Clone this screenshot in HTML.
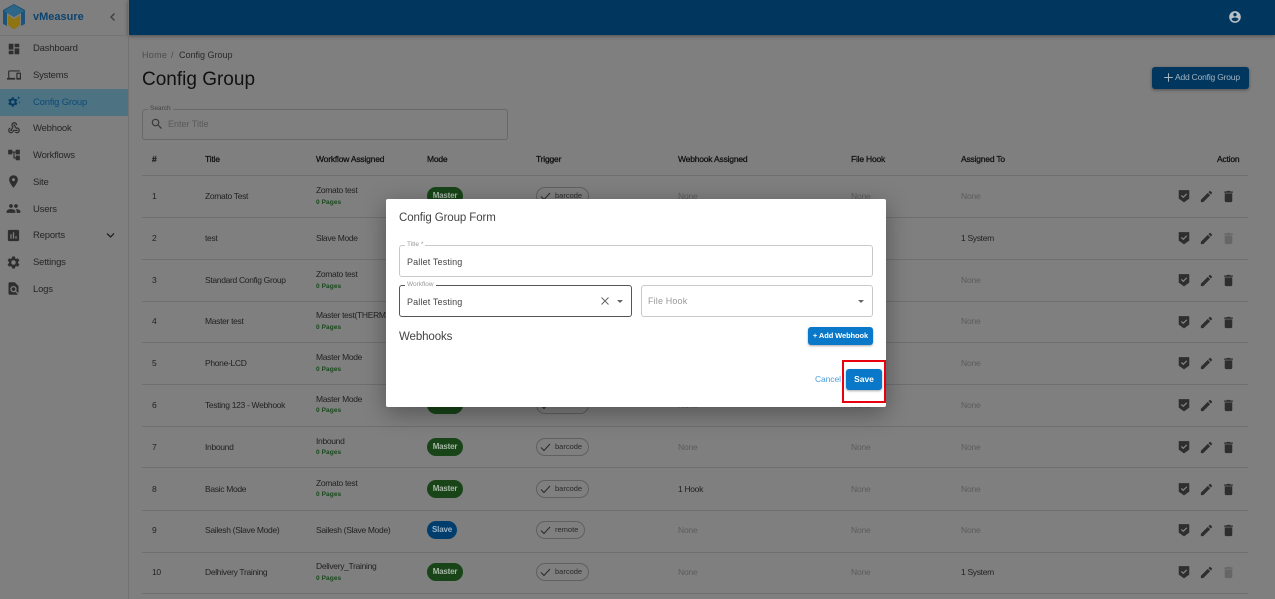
<!DOCTYPE html>
<html><head><meta charset="utf-8">
<style>
html,body{margin:0;padding:0;width:1275px;height:599px;overflow:hidden;background:#7f7f7f;font-family:"Liberation Sans",sans-serif;color:#1c1c1c}
body{filter:blur(.35px)}
*{box-sizing:border-box}
.a{position:absolute;white-space:nowrap;line-height:12px}
svg{position:absolute;display:block}
.s{font-size:9.5px;color:#262626;left:33px;letter-spacing:-.2px}
.th{font-size:8.5px;color:#101010;top:153px;letter-spacing:-.2px;-webkit-text-stroke:.25px #101010}
.t{font-size:8.5px;color:#222;letter-spacing:-.32px}
.sub{font-size:6.5px;color:#184a1c;left:316px;font-weight:bold;letter-spacing:.1px}
.n{font-size:8.5px;color:#5c5c5c;letter-spacing:-.2px}
.l{position:absolute;left:142px;width:1106px;height:1px;background:#6f6f6f}
.chip{position:absolute;height:18px;border-radius:9px;color:#a8b8a8;font-size:8px;font-weight:bold;text-align:center;line-height:18px;letter-spacing:-.2px}
.tr{position:absolute;left:536px;height:18px;border:1px solid #606060;border-radius:9px;font-size:7.5px;color:#2a2a2a;line-height:16px;padding-left:18px}
.fld{position:absolute;border:1px solid #c9c9c9;border-radius:3px;background:#fff}
.lg{position:absolute;background:#fff;padding:0 2px;font-size:6.5px;color:#999;line-height:8px;white-space:nowrap}
</style></head><body>
<svg width="0" height="0" style="position:absolute"><defs>
<symbol id="sh" viewBox="0 0 24 24"><path d="M3 2h18v14.5L12 23 3 16.5z" fill="#2e2e2e"/><path d="M7.5 11l3.2 3.2 6-6" fill="none" stroke="#888" stroke-width="2"/></symbol>
<symbol id="ed" viewBox="0 0 24 24"><path fill="#2e2e2e" d="M3 17.25V21h3.75L17.81 9.94l-3.75-3.75L3 17.25zM20.71 7.04c.39-.39.39-1.02 0-1.41l-2.34-2.34c-.39-.39-1.02-.39-1.41 0l-1.83 1.83 3.75 3.75 1.83-1.83z"/></symbol>
<symbol id="de" viewBox="0 0 24 24"><path fill="#2e2e2e" d="M6 19c0 1.1.9 2 2 2h8c1.1 0 2-.9 2-2V7H6v12zM19 4h-3.5l-1-1h-5l-1 1H5v2h14V4z"/></symbol>
<symbol id="dd" viewBox="0 0 24 24"><path fill="#666" d="M6 19c0 1.1.9 2 2 2h8c1.1 0 2-.9 2-2V7H6v12zM19 4h-3.5l-1-1h-5l-1 1H5v2h14V4z"/></symbol>
<symbol id="gear" viewBox="0 0 24 24"><path d="M19.14 12.94c.04-.3.06-.61.06-.94 0-.32-.02-.64-.07-.94l2.03-1.58c.18-.14.23-.41.12-.61l-1.92-3.32c-.12-.22-.37-.29-.59-.22l-2.39.96c-.5-.38-1.03-.7-1.62-.94l-.36-2.54c-.04-.24-.24-.41-.48-.41h-3.84c-.24 0-.43.17-.47.41l-.36 2.54c-.59.24-1.13.57-1.62.94l-2.39-.96c-.22-.08-.47 0-.59.22L2.74 8.87c-.12.21-.08.47.12.61l2.03 1.58c-.05.3-.09.63-.09.94s.02.64.07.94l-2.03 1.58c-.18.14-.23.41-.12.61l1.92 3.32c.12.22.37.29.59.22l2.39-.96c.5.38 1.03.7 1.62.94l.36 2.54c.05.24.24.41.48.41h3.84c.24 0 .44-.17.47-.41l.36-2.54c.59-.24 1.13-.56 1.62-.94l2.39.96c.22.08.47 0 .59-.22l1.92-3.32c.12-.22.07-.47-.12-.61l-2.01-1.58zM12 15.6c-1.98 0-3.6-1.62-3.6-3.6s1.62-3.6 3.6-3.6 3.6 1.62 3.6 3.6-1.62 3.6-3.6 3.6z"/></symbol>
</defs></svg>

<!-- header -->
<div style="position:absolute;left:128px;top:0;width:1147px;height:35px;background:#01375e;box-shadow:0 1px 4px rgba(0,0,0,.4)"></div>
<svg style="left:1228px;top:10px" width="14" height="14" viewBox="0 0 24 24"><path fill="#b8c0c6" d="M12 2C6.48 2 2 6.48 2 12s4.48 10 10 10 10-4.48 10-10S17.52 2 12 2zm0 3c1.66 0 3 1.34 3 3s-1.34 3-3 3-3-1.34-3-3 1.34-3 3-3zm0 14.2c-2.5 0-4.71-1.28-6-3.22.03-1.99 4-3.08 6-3.08 1.99 0 5.97 1.09 6 3.08-1.29 1.94-3.5 3.22-6 3.22z"/></svg>

<!-- sidebar -->
<div style="position:absolute;left:128px;top:0;width:1px;height:599px;background:#727272"></div>
<div style="position:absolute;left:0;top:35px;width:128px;height:1px;background:#747474"></div>
<svg style="left:2px;top:4px" width="24" height="26" viewBox="0 0 24 26">
<polygon points="12,0 23,6 23,20 19,22 19,9 12,13 5,9 5,22 1,20 1,6" fill="#1f5378"/>
<polygon points="12,1 22,7 12,13 2,7" fill="#2e6688"/>
<polygon points="6,11 12,15 18,11 18,21 12,25.5 6,21" fill="#8e7512"/>
</svg>
<div class="a" style="left:33px;top:11px;font-size:11px;font-weight:bold;color:#0c4470;line-height:12px">vMeasure</div>
<svg style="left:109px;top:12px" width="8" height="10" viewBox="0 0 8 10"><path d="M5.5 1.5L2 5l3.5 3.5" fill="none" stroke="#3c3c3c" stroke-width="1.3"/></svg>
<div style="position:absolute;left:0;top:89px;width:128px;height:26.5px;background:#4d7383"></div>

<svg style="left:7px;top:42px" width="14" height="14" viewBox="0 0 24 24"><path fill="#2e2e2e" d="M3 13h8V3H3v10zm0 8h8v-6H3v6zm10 0h8V11h-8v10zm0-18v6h8V3h-8z"/></svg>
<svg style="left:7px;top:68px" width="14" height="14" viewBox="0 0 24 24"><path fill="#2e2e2e" d="M4 6h18V4H4c-1.1 0-2 .9-2 2v11H0v3h14v-3H4V6zm19 2h-6c-.55 0-1 .45-1 1v10c0 .55.45 1 1 1h6c.55 0 1-.45 1-1V9c0-.55-.45-1-1-1zm-1 9h-4v-7h4v7z"/></svg>
<svg style="left:7px;top:95px" width="14" height="14" viewBox="0 0 24 24"><use href="#gear" x="0" y="2" width="20" height="20" fill="#083c64"/><path fill="#083c64" d="M20 2l.8 2 2 .8-2 .8-.8 2-.8-2-2-.8 2-.8zM21.5 11l.5 1.2 1.2.5-1.2.5-.5 1.2-.5-1.2-1.2-.5 1.2-.5z"/></svg>
<svg style="left:7px;top:121px" width="14" height="14" viewBox="0 0 24 24"><path fill="#2e2e2e" d="M10 15h5.88c.27-.31.67-.5 1.12-.5.83 0 1.5.67 1.5 1.5s-.67 1.5-1.5 1.5c-.44 0-.84-.19-1.12-.5H11.9c-.46 2.28-2.48 4-4.9 4-2.76 0-5-2.24-5-5 0-2.42 1.72-4.44 4-4.9v2.07c-1.16.41-2 1.53-2 2.83 0 1.65 1.35 3 3 3s3-1.35 3-3v-1zm2.5-11c1.65 0 3 1.35 3 3h2c0-2.76-2.24-5-5-5s-5 2.24-5 5c0 1.43.6 2.71 1.55 3.62l-2.35 3.9c-.68.14-1.2.75-1.2 1.48 0 .83.67 1.5 1.5 1.5s1.5-.67 1.5-1.5c0-.16-.02-.31-.07-.45l3.38-5.63C10.49 9.61 9.5 8.42 9.5 7c0-1.65 1.35-3 3-3zm4.5 9c-.64 0-1.23.2-1.72.54l-3.05-5.07C11.53 8.35 11 7.74 11 7c0-.83.67-1.5 1.5-1.5S14 6.17 14 7c0 .15-.02.29-.06.43l2.19 3.65c.28-.05.57-.08.87-.08 2.76 0 5 2.24 5 5s-2.24 5-5 5c-1.85 0-3.47-1.01-4.33-2.5h2.67c.48.32 1.05.5 1.66.5 1.65 0 3-1.35 3-3s-1.35-3-3-3z"/></svg>
<svg style="left:7px;top:148px" width="14" height="14" viewBox="0 0 24 24"><path fill="#2e2e2e" d="M22 11V3h-7v3H9V3H2v8h7V8h2v10h4v3h7v-8h-7v3h-2V8h2v3z"/></svg>
<svg style="left:6px;top:174px" width="15" height="15" viewBox="0 0 24 24"><path fill="#2e2e2e" d="M12 2C8.13 2 5 5.13 5 9c0 5.25 7 13 7 13s7-7.75 7-13c0-3.87-3.13-7-7-7zm0 9.5c-1.38 0-2.5-1.12-2.5-2.5s1.12-2.5 2.5-2.5 2.5 1.12 2.5 2.5-1.12 2.5-2.5 2.5z"/></svg>
<svg style="left:6px;top:201px" width="15" height="15" viewBox="0 0 24 24"><path fill="#2e2e2e" d="M16 11c1.66 0 2.99-1.34 2.99-3S17.66 5 16 5c-1.66 0-3 1.34-3 3s1.34 3 3 3zm-8 0c1.66 0 2.99-1.34 2.99-3S9.66 5 8 5C6.34 5 5 6.34 5 8s1.34 3 3 3zm0 2c-2.33 0-7 1.17-7 3.5V19h14v-2.5c0-2.33-4.67-3.5-7-3.5zm8 0c-.29 0-.62.02-.97.05 1.16.84 1.97 1.97 1.97 3.45V19h6v-2.5c0-2.33-4.67-3.5-7-3.5z"/></svg>
<svg style="left:6px;top:228px" width="15" height="15" viewBox="0 0 24 24"><path fill="#2e2e2e" d="M19 3H5c-1.1 0-2 .9-2 2v14c0 1.1.9 2 2 2h14c1.1 0 2-.9 2-2V5c0-1.1-.9-2-2-2zM9 17H7v-7h2v7zm4 0h-2V7h2v10zm4 0h-2v-4h2v4z"/></svg>
<svg style="left:6px;top:255px" width="15" height="15" viewBox="0 0 24 24"><use href="#gear" width="24" height="24" fill="#2e2e2e"/></svg>
<svg style="left:6px;top:281px" width="15" height="15" viewBox="0 0 24 24"><path fill="#2e2e2e" d="M20 19.59V8l-6-6H6c-1.1 0-1.99.9-1.99 2L4 20c0 1.1.89 2 1.99 2H18c.45 0 .85-.15 1.19-.4l-4.43-4.43c-.8.52-1.74.83-2.76.83-2.76 0-5-2.24-5-5s2.24-5 5-5 5 2.24 5 5c0 1.02-.31 1.96-.83 2.75L20 19.59zM9 13c0 1.66 1.34 3 3 3s3-1.34 3-3-1.34-3-3-3-3 1.34-3 3z"/></svg>
<svg style="left:106px;top:232px" width="9" height="7" viewBox="0 0 9 7"><path d="M1 1.5l3.5 3.5L8 1.5" fill="none" stroke="#222" stroke-width="1.3"/></svg>

<div class="a s" style="top:43px">Dashboard</div>
<div class="a s" style="top:70px">Systems</div>
<div class="a s" style="top:97px;color:#0d4a78">Config Group</div>
<div class="a s" style="top:123px">Webhook</div>
<div class="a s" style="top:150px">Workflows</div>
<div class="a s" style="top:177px">Site</div>
<div class="a s" style="top:204px">Users</div>
<div class="a s" style="top:230px">Reports</div>
<div class="a s" style="top:257px">Settings</div>
<div class="a s" style="top:284px">Logs</div>

<!-- page head -->
<div class="a" style="left:142px;top:49px;font-size:9px;color:#4c4c4c;letter-spacing:.3px">Home</div>
<div class="a" style="left:171px;top:49px;font-size:9px;color:#4c4c4c">/</div>
<div class="a" style="left:179px;top:49px;font-size:9px;color:#2a2a2a">Config Group</div>
<div class="a" style="left:142px;top:69px;font-size:19px;line-height:22px;color:#111">Config Group</div>
<div style="position:absolute;left:1152px;top:67px;width:97px;height:22px;background:#01375e;border-radius:3px;box-shadow:0 1px 3px rgba(0,0,0,.4)"></div>
<svg style="left:1163px;top:72px" width="11" height="11" viewBox="0 0 11 11"><path d="M1.2 5.5h8.6M5.5 1.2v8.6" stroke="#a8b8c4" stroke-width="1"/></svg>
<div class="a" style="left:1175px;top:71px;font-size:8.5px;color:#a0b2c0;letter-spacing:-.2px">Add Config Group</div>

<!-- search -->
<div style="position:absolute;left:142px;top:109px;width:366px;height:31px;border:1px solid #686868;border-radius:3px"></div>
<div class="a" style="left:148px;top:105px;padding:0 2px;background:#7f7f7f;font-size:6.5px;color:#444;line-height:8px">Search</div>
<svg style="left:150px;top:117px" width="14" height="14" viewBox="0 0 24 24"><path fill="#3a3a3a" d="M15.5 14h-.79l-.28-.27C15.41 12.59 16 11.11 16 9.5 16 5.91 13.09 3 9.5 3S3 5.91 3 9.5 5.91 16 9.5 16c1.61 0 3.09-.59 4.23-1.57l.27.28v.79l5 4.99L20.49 19l-4.99-5zm-6 0C7.01 14 5 11.99 5 9.5S7.01 5 9.5 5 14 7.01 14 9.5 11.99 14 9.5 14z"/></svg>
<div class="a" style="left:168px;top:118px;font-size:9px;color:#5a5a5a">Enter Title</div>

<!-- table head -->
<div class="a th" style="left:152px">#</div>
<div class="a th" style="left:205px">Title</div>
<div class="a th" style="left:316px">Workflow Assigned</div>
<div class="a th" style="left:427px">Mode</div>
<div class="a th" style="left:536px">Trigger</div>
<div class="a th" style="left:678px">Webhook Assigned</div>
<div class="a th" style="left:851px">File Hook</div>
<div class="a th" style="left:961px">Assigned To</div>
<div class="a th" style="left:1217px">Action</div>

<div class="l" style="top:175px"></div><div class="l" style="top:217px"></div><div class="l" style="top:259px"></div><div class="l" style="top:301px"></div><div class="l" style="top:342px"></div><div class="l" style="top:384px"></div><div class="l" style="top:426px"></div><div class="l" style="top:467px"></div><div class="l" style="top:510px"></div><div class="l" style="top:552px"></div><div class="l" style="top:593px"></div>

<!-- rows -->
<div class="a t" style="left:152px;top:190px">1</div><div class="a t" style="left:205px;top:190px">Zomato Test</div><div class="a t" style="left:316px;top:184px">Zomato test</div><div class="a sub" style="top:197px">0 Pages</div>
<div class="a t" style="left:152px;top:232px">2</div><div class="a t" style="left:205px;top:232px">test</div><div class="a t" style="left:316px;top:232px">Slave Mode</div>
<div class="a t" style="left:152px;top:274px">3</div><div class="a t" style="left:205px;top:274px">Standard Config Group</div><div class="a t" style="left:316px;top:268px">Zomato test</div><div class="a sub" style="top:281px">0 Pages</div>
<div class="a t" style="left:152px;top:315px">4</div><div class="a t" style="left:205px;top:315px">Master test</div><div class="a t" style="left:316px;top:309px">Master test(THERMAL)</div><div class="a sub" style="top:322px">0 Pages</div>
<div class="a t" style="left:152px;top:357px">5</div><div class="a t" style="left:205px;top:357px">Phone-LCD</div><div class="a t" style="left:316px;top:351px">Master Mode</div><div class="a sub" style="top:364px">0 Pages</div>
<div class="a t" style="left:152px;top:399px">6</div><div class="a t" style="left:205px;top:399px">Testing 123 - Webhook</div><div class="a t" style="left:316px;top:393px">Master Mode</div><div class="a sub" style="top:405px">0 Pages</div>
<div class="a t" style="left:152px;top:441px">7</div><div class="a t" style="left:205px;top:441px">Inbound</div><div class="a t" style="left:316px;top:435px">Inbound</div><div class="a sub" style="top:447px">0 Pages</div>
<div class="a t" style="left:152px;top:483px">8</div><div class="a t" style="left:205px;top:483px">Basic Mode</div><div class="a t" style="left:316px;top:477px">Zomato test</div><div class="a sub" style="top:489px">0 Pages</div>
<div class="a t" style="left:152px;top:524px">9</div><div class="a t" style="left:205px;top:524px">Sailesh (Slave Mode)</div><div class="a t" style="left:316px;top:524px">Sailesh (Slave Mode)</div>
<div class="a t" style="left:152px;top:566px">10</div><div class="a t" style="left:205px;top:566px">Delhivery Training</div><div class="a t" style="left:316px;top:560px">Delivery_Training</div><div class="a sub" style="top:573px">0 Pages</div>

<!-- chips -->
<div class="chip" style="left:427px;top:187px;width:36px;background:#184418">Master</div>
<div class="chip" style="left:427px;top:396px;width:36px;background:#184418">Master</div>
<div class="chip" style="left:427px;top:438px;width:36px;background:#184418">Master</div>
<div class="chip" style="left:427px;top:480px;width:36px;background:#184418">Master</div>
<div class="chip" style="left:427px;top:521px;width:30px;background:#013e6e;color:#9ab4c8">Slave</div>
<div class="chip" style="left:427px;top:563px;width:36px;background:#184418">Master</div>

<div class="tr" style="top:187px;width:53px"><svg style="left:3px;top:4px" width="11" height="9" viewBox="0 0 11 9"><path d="M1 4.5l3 3L10 1" fill="none" stroke="#2a2a2a" stroke-width="1"/></svg>barcode</div>
<div class="tr" style="top:396px;width:53px"><svg style="left:3px;top:4px" width="11" height="9" viewBox="0 0 11 9"><path d="M1 4.5l3 3L10 1" fill="none" stroke="#2a2a2a" stroke-width="1"/></svg>barcode</div>
<div class="tr" style="top:438px;width:53px"><svg style="left:3px;top:4px" width="11" height="9" viewBox="0 0 11 9"><path d="M1 4.5l3 3L10 1" fill="none" stroke="#2a2a2a" stroke-width="1"/></svg>barcode</div>
<div class="tr" style="top:480px;width:53px"><svg style="left:3px;top:4px" width="11" height="9" viewBox="0 0 11 9"><path d="M1 4.5l3 3L10 1" fill="none" stroke="#2a2a2a" stroke-width="1"/></svg>barcode</div>
<div class="tr" style="top:521px;width:49px"><svg style="left:3px;top:4px" width="11" height="9" viewBox="0 0 11 9"><path d="M1 4.5l3 3L10 1" fill="none" stroke="#2a2a2a" stroke-width="1"/></svg>remote</div>
<div class="tr" style="top:563px;width:53px"><svg style="left:3px;top:4px" width="11" height="9" viewBox="0 0 11 9"><path d="M1 4.5l3 3L10 1" fill="none" stroke="#2a2a2a" stroke-width="1"/></svg>barcode</div>

<!-- webhook / file hook / assigned -->
<div class="a n" style="left:678px;top:190px">None</div><div class="a n" style="left:851px;top:190px">None</div><div class="a n" style="left:961px;top:190px">None</div>
<div class="a t" style="left:961px;top:232px">1 System</div>
<div class="a n" style="left:961px;top:274px">None</div>
<div class="a n" style="left:961px;top:315px">None</div>
<div class="a n" style="left:961px;top:357px">None</div>
<div class="a n" style="left:678px;top:399px">None</div><div class="a n" style="left:851px;top:399px">None</div><div class="a n" style="left:961px;top:399px">None</div>
<div class="a n" style="left:678px;top:441px">None</div><div class="a n" style="left:851px;top:441px">None</div><div class="a n" style="left:961px;top:441px">None</div>
<div class="a t" style="left:678px;top:483px">1 Hook</div><div class="a n" style="left:851px;top:483px">None</div><div class="a n" style="left:961px;top:483px">None</div>
<div class="a n" style="left:678px;top:524px">None</div><div class="a n" style="left:851px;top:524px">None</div><div class="a n" style="left:961px;top:524px">None</div>
<div class="a n" style="left:678px;top:566px">None</div><div class="a n" style="left:851px;top:566px">None</div><div class="a t" style="left:961px;top:566px">1 System</div>

<!-- action icons -->
<svg style="left:1177px;top:189px" width="14" height="14"><use href="#sh"/></svg><svg style="left:1199px;top:189px" width="15" height="15"><use href="#ed"/></svg><svg style="left:1221px;top:189px" width="15" height="15"><use href="#de"/></svg>
<svg style="left:1177px;top:231px" width="14" height="14"><use href="#sh"/></svg><svg style="left:1199px;top:231px" width="15" height="15"><use href="#ed"/></svg><svg style="left:1221px;top:231px" width="15" height="15"><use href="#dd"/></svg>
<svg style="left:1177px;top:273px" width="14" height="14"><use href="#sh"/></svg><svg style="left:1199px;top:273px" width="15" height="15"><use href="#ed"/></svg><svg style="left:1221px;top:273px" width="15" height="15"><use href="#de"/></svg>
<svg style="left:1177px;top:315px" width="14" height="14"><use href="#sh"/></svg><svg style="left:1199px;top:315px" width="15" height="15"><use href="#ed"/></svg><svg style="left:1221px;top:315px" width="15" height="15"><use href="#de"/></svg>
<svg style="left:1177px;top:356px" width="14" height="14"><use href="#sh"/></svg><svg style="left:1199px;top:356px" width="15" height="15"><use href="#ed"/></svg><svg style="left:1221px;top:356px" width="15" height="15"><use href="#de"/></svg>
<svg style="left:1177px;top:398px" width="14" height="14"><use href="#sh"/></svg><svg style="left:1199px;top:398px" width="15" height="15"><use href="#ed"/></svg><svg style="left:1221px;top:398px" width="15" height="15"><use href="#de"/></svg>
<svg style="left:1177px;top:440px" width="14" height="14"><use href="#sh"/></svg><svg style="left:1199px;top:440px" width="15" height="15"><use href="#ed"/></svg><svg style="left:1221px;top:440px" width="15" height="15"><use href="#de"/></svg>
<svg style="left:1177px;top:482px" width="14" height="14"><use href="#sh"/></svg><svg style="left:1199px;top:482px" width="15" height="15"><use href="#ed"/></svg><svg style="left:1221px;top:482px" width="15" height="15"><use href="#de"/></svg>
<svg style="left:1177px;top:523px" width="14" height="14"><use href="#sh"/></svg><svg style="left:1199px;top:523px" width="15" height="15"><use href="#ed"/></svg><svg style="left:1221px;top:523px" width="15" height="15"><use href="#de"/></svg>
<svg style="left:1177px;top:565px" width="14" height="14"><use href="#sh"/></svg><svg style="left:1199px;top:565px" width="15" height="15"><use href="#ed"/></svg><svg style="left:1221px;top:565px" width="15" height="15"><use href="#dd"/></svg>

<!-- modal -->
<div style="position:absolute;left:386px;top:199px;width:500px;height:208px;background:#fff;border-radius:2px;box-shadow:0 6px 24px rgba(0,0,0,.35)"></div>
<div class="a" style="left:399px;top:211px;font-size:11.5px;color:#444;line-height:14px;letter-spacing:-.1px">Config Group Form</div>
<div class="fld" style="left:399px;top:245px;width:474px;height:32px"></div>
<div class="lg" style="left:405px;top:241px">Title *</div>
<div class="a" style="left:407px;top:256px;font-size:9px;color:#444;letter-spacing:.15px">Pallet Testing</div>
<div class="fld" style="left:399px;top:285px;width:233px;height:32px;border-color:#555"></div>
<div class="lg" style="left:405px;top:281px">Workflow</div>
<div class="a" style="left:407px;top:296px;font-size:9px;color:#444;letter-spacing:.15px">Pallet Testing</div>
<svg style="left:600px;top:296px" width="10" height="10" viewBox="0 0 10 10"><path d="M1.5 1.5l7 7M8.5 1.5l-7 7" stroke="#666" stroke-width="1"/></svg>
<svg style="left:616px;top:299px" width="8" height="5" viewBox="0 0 8 5"><path d="M1 1h6L4 4z" fill="#666"/></svg>
<div class="fld" style="left:641px;top:285px;width:232px;height:32px"></div>
<div class="a" style="left:648px;top:295px;font-size:9px;color:#999;letter-spacing:.15px">File Hook</div>
<svg style="left:857px;top:299px" width="8" height="5" viewBox="0 0 8 5"><path d="M1 1h6L4 4z" fill="#666"/></svg>
<div class="a" style="left:399px;top:330px;font-size:11.5px;color:#444;line-height:14px;letter-spacing:-.1px">Webhooks</div>
<div style="position:absolute;left:808px;top:327px;width:65px;height:18px;background:#0a78c8;border-radius:3px;box-shadow:0 1px 2px rgba(0,0,0,.35);color:#fff;font-size:7.5px;font-weight:bold;text-align:center;line-height:17px;letter-spacing:-.1px">+ Add Webhook</div>
<div class="a" style="left:815px;top:373px;font-size:8.5px;color:#4a9fdc;letter-spacing:-.1px">Cancel</div>
<div style="position:absolute;left:846px;top:369px;width:36px;height:21px;background:#0a78c8;border-radius:3px;box-shadow:0 1px 2px rgba(0,0,0,.35);color:#fff;font-size:8.5px;font-weight:bold;text-align:center;line-height:20px">Save</div>
<div style="position:absolute;left:842px;top:360px;width:44px;height:43px;border:2px solid #e8000f"></div>
</body></html>
